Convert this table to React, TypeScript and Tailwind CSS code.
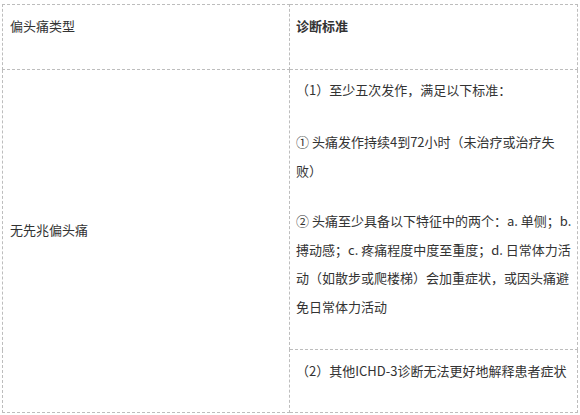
export default function App() {
  return (
    <div
      className="min-h-screen bg-white pl-[2px] pt-[4px] text-[13px] text-[#333]"
      style={{}}
    >
      <table className="w-[575px] table-fixed border-collapse font-['Noto_Sans_CJK_SC','Noto_Sans',sans-serif]">
        <colgroup>
          <col className="w-[287px]" />
          <col className="w-[288px]" />
        </colgroup>
        <tbody>
          <tr>
            <td className="border border-dashed border-[#bdbdbd] px-[7px] pt-[7px] pb-[7px] align-top">
              <p className="mb-[22px] leading-[28px]">偏头痛类型</p>
            </td>
            <td className="border border-dashed border-[#bdbdbd] px-[6px] pt-[7px] pb-[7px] align-top">
              <p className="mb-[22px] leading-[28px] font-bold">诊断标准</p>
            </td>
          </tr>
          <tr>
            <td
              rowSpan={2}
              className="border border-dashed border-[#bdbdbd] px-[7px] py-[7px] align-middle"
            >
              <p className="mb-[22px] leading-[28px]">无先兆偏头痛</p>
            </td>
            <td className="border border-dashed border-[#bdbdbd] pl-[6px] pr-[4px] pt-[6px] pb-[6px] align-top">
              <p className="mb-[24px] leading-[28px]">（1）至少五次发作，满足以下标准：</p>
              <p className="mb-[22px] leading-[28.5px]">
                ① 头痛发作持续4到72小时（未治疗或治疗失败）
              </p>
              <p className="mb-[22px] leading-[28.5px]">
                ② 头痛至少具备以下特征中的两个：a. 单侧；b.
                搏动感；c. 疼痛程度中度至重度；d. 日常体力活动（如散步或爬楼梯）会加重症状，或因头痛避免日常体力活动
              </p>
            </td>
          </tr>
          <tr>
            <td className="border border-dashed border-[#bdbdbd] pl-[6px] pr-[4px] pt-[7px] pb-[5px] align-top">
              <p className="mb-[22px] leading-[28px]">（2）其他ICHD-3诊断无法更好地解释患者症状</p>
            </td>
          </tr>
        </tbody>
      </table>
    </div>
  );
}
